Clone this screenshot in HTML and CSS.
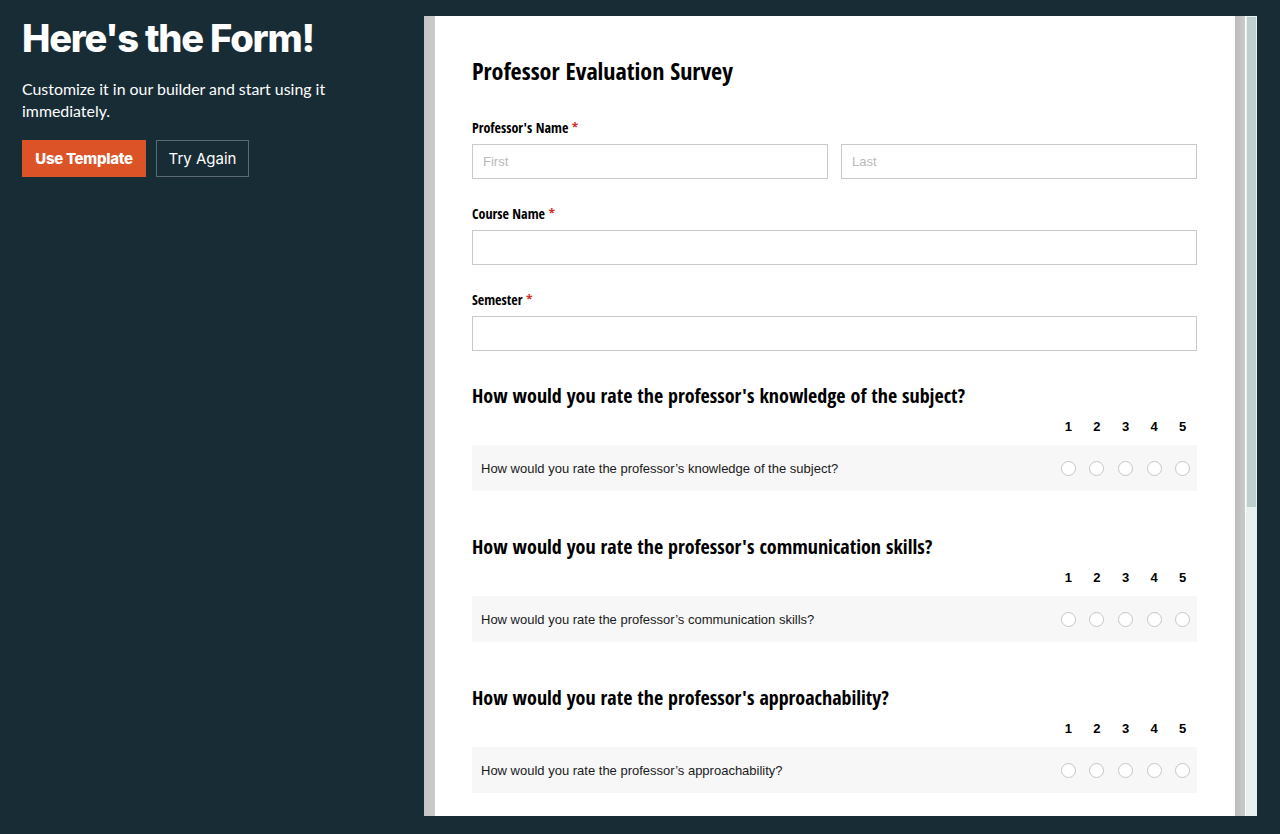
FILE: index.html
```html
<!DOCTYPE html>
<html lang="en">
<head>
<meta charset="utf-8">
<title>Professor Evaluation Survey</title>
<link rel="stylesheet" href="styles.css">
</head>
<body>
<div class="page">
  <section class="intro">
    <h1 class="intro-title">Here's the Form!</h1>
    <p class="intro-text">Customize it in our builder and start using it immediately.</p>
    <div class="intro-actions">
      <a class="btn btn-primary" href="#">Use Template</a>
      <a class="btn btn-outline" href="#">Try Again</a>
    </div>
  </section>

  <div class="frame">
    <div class="frame-edge-left"></div>
    <div class="form-area">
      <h2 class="form-title">Professor Evaluation Survey</h2>

      <div class="field">
        <label class="field-label">Professor's Name <span class="req">*</span></label>
        <div class="name-row">
          <input class="text-input" type="text" placeholder="First">
          <input class="text-input" type="text" placeholder="Last">
        </div>
      </div>

      <div class="field">
        <label class="field-label">Course Name <span class="req">*</span></label>
        <input class="text-input" type="text">
      </div>

      <div class="field">
        <label class="field-label">Semester <span class="req">*</span></label>
        <input class="text-input" type="text">
      </div>

      <div class="matrix">
        <h3 class="matrix-title">How would you rate the professor's knowledge of the subject?</h3>
        <div class="matrix-head"><span>1</span><span>2</span><span>3</span><span>4</span><span>5</span></div>
        <div class="matrix-row">
          <span class="matrix-q">How would you rate the professor’s knowledge of the subject?</span>
          <div class="matrix-opts"><span class="radio"></span><span class="radio"></span><span class="radio"></span><span class="radio"></span><span class="radio"></span></div>
        </div>
      </div>

      <div class="matrix">
        <h3 class="matrix-title">How would you rate the professor's communication skills?</h3>
        <div class="matrix-head"><span>1</span><span>2</span><span>3</span><span>4</span><span>5</span></div>
        <div class="matrix-row">
          <span class="matrix-q">How would you rate the professor’s communication skills?</span>
          <div class="matrix-opts"><span class="radio"></span><span class="radio"></span><span class="radio"></span><span class="radio"></span><span class="radio"></span></div>
        </div>
      </div>

      <div class="matrix">
        <h3 class="matrix-title">How would you rate the professor's approachability?</h3>
        <div class="matrix-head"><span>1</span><span>2</span><span>3</span><span>4</span><span>5</span></div>
        <div class="matrix-row">
          <span class="matrix-q">How would you rate the professor’s approachability?</span>
          <div class="matrix-opts"><span class="radio"></span><span class="radio"></span><span class="radio"></span><span class="radio"></span><span class="radio"></span></div>
        </div>
      </div>
    </div>
    <div class="frame-edge-right"></div>
    <div class="scrollbar"><div class="scroll-thumb"></div></div>
  </div>
</div>
</body>
</html>
```
FILE: styles.css
```css
html, body {
  margin: 0;
  padding: 0;
  height: 100%;
  overflow: hidden;
}
body {
  background: #182c35;
  font-family: "Liberation Sans", Arial, sans-serif;
}
.page {
  display: flex;
  align-items: flex-start;
  height: 834px;
}
.intro {
  width: 424px;
  flex: none;
  box-sizing: border-box;
  padding: 13px 0 0 22px;
  color: #fff;
}
.intro-title {
  margin: 0;
  font-family: Inter, "Noto Sans", sans-serif;
  font-weight: 800;
  font-size: 38px;
  line-height: 50px;
  letter-spacing: -1.2px;
}
.intro-text {
  margin: 15px 0 0;
  width: 330px;
  font-family: Lato, sans-serif;
  font-size: 15.9px;
  line-height: 22px;
}
.intro-actions {
  display: flex;
  gap: 10px;
  margin-top: 18px;
}
.btn {
  display: flex;
  align-items: center;
  justify-content: center;
  height: 37px;
  box-sizing: border-box;
  text-decoration: none;
  color: #fff;
  font-family: Inter, sans-serif;
  font-size: 15px;
}
.btn-primary {
  width: 124px;
  background: #dc5328;
  font-weight: 800;
  letter-spacing: -0.3px;
}
.btn-outline {
  width: 93px;
  border: 1px solid #5c6a71;
  font-weight: 400;
}
.frame {
  display: flex;
  flex: none;
  margin-top: 16px;
  height: 800px;
}
.frame-edge-left {
  width: 11px;
  background: linear-gradient(to right, #c4c4c4, #cbcbcb);
}
.form-area {
  width: 800px;
  box-sizing: border-box;
  background: #fff;
  padding: 39px 38px 0 37px;
  overflow: hidden;
}
.frame-edge-right {
  width: 10px;
  background: linear-gradient(to right, #bdbdbd, #cacaca);
}
.scrollbar {
  width: 12px;
  background: #e8f1ef;
  box-sizing: border-box;
  padding: 1px 1px 0;
  border-left: 1px solid #fff;
}
.scroll-thumb {
  height: 490px;
  background: #bfcfcf;
}
.form-title {
  margin: 0;
  font-family: "Open Sans Condensed", "Open Sans", sans-serif;
  font-stretch: 75%;
  font-weight: 700;
  font-size: 24px;
  line-height: 32px;
  color: #000;
}
.field {
  margin-top: 26px;
}
.form-title + .field {
  margin-top: 32px;
}
.field-label {
  display: block;
  font-family: "Open Sans Condensed", "Open Sans", sans-serif;
  font-stretch: 75%;
  font-weight: 700;
  font-size: 14px;
  line-height: 18px;
  color: #000;
  margin-bottom: 7px;
}
.req {
  color: #d0312d;
}
.name-row {
  display: flex;
  gap: 13px;
}
.text-input {
  display: block;
  width: 100%;
  height: 35px;
  box-sizing: border-box;
  border: 1px solid #c9c9c9;
  border-radius: 0;
  padding: 0 10px;
  font-family: "Liberation Sans", Arial, sans-serif;
  font-size: 13px;
  color: #333;
  background: #fff;
  outline: none;
}
.text-input::placeholder {
  color: #b9b9b9;
}
.matrix {
  margin-top: 32px;
}
.matrix + .matrix {
  margin-top: 43px;
}
.matrix-title {
  margin: 0;
  font-family: "Open Sans Condensed", "Open Sans", sans-serif;
  font-stretch: 75%;
  font-weight: 700;
  font-size: 20px;
  line-height: 26px;
  color: #000;
}
.matrix-head,
.matrix-opts {
  display: grid;
  grid-template-columns: repeat(5, 28.6px);
  justify-items: center;
  align-items: center;
}
.matrix-head {
  justify-content: end;
  padding-right: 0;
  margin-top: 10px;
  font-weight: 700;
  font-size: 13px;
  line-height: 16px;
  color: #000;
}
.matrix-row {
  display: flex;
  align-items: center;
  justify-content: space-between;
  height: 46px;
  margin-top: 10px;
  padding: 0 0 0 9px;
  background: #f7f7f7;
}
.matrix-q {
  font-size: 13px;
  color: #1a1a1a;
}
.radio {
  width: 15px;
  height: 15px;
  box-sizing: border-box;
  border: 1px solid #c6c6c6;
  border-radius: 50%;
  background: #fff;
}
```
